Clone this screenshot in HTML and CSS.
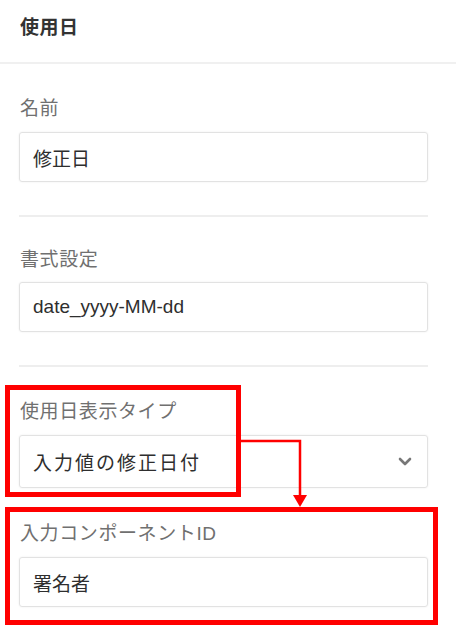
FILE: index.html
```html
<!DOCTYPE html>
<html lang="ja">
<head>
<meta charset="utf-8">
<link rel="stylesheet" href="styles.css">
</head>
<body>
<div class="panel">
  <div class="header">使用日</div>
  <div class="field sep">
    <div class="label">名前</div>
    <div class="input">修正日</div>
  </div>
  <div class="field sep tight">
    <div class="label">書式設定</div>
    <div class="input">date_yyyy-MM-dd</div>
  </div>
  <div class="field open">
    <div class="label">使用日表示タイプ</div>
    <div class="input select">
      <span class="select-text">入力値の修正日付</span>
      <svg class="chevron" width="14" height="9" viewBox="0 0 14 9"><path d="M2 2 L7 7 L12 2" fill="none" stroke="#777" stroke-width="2.6" stroke-linecap="round" stroke-linejoin="round"/></svg>
    </div>
  </div>
  <div class="field last">
    <div class="label">入力コンポーネントID</div>
    <div class="input">署名者</div>
  </div>

  <div class="callout callout-1"></div>
  <div class="callout callout-2"></div>
  <svg class="arrow" width="456" height="636" viewBox="0 0 456 636">
    <path d="M240 441 H300 V496" fill="none" stroke="#ff0000" stroke-width="2.5"/>
    <polygon points="293,495 307,495 300,507" fill="#ff0000"/>
  </svg>
</div>
</body>
</html>
```

FILE: styles.css
```css
html, body {
  margin: 0;
  padding: 0;
  background: #ffffff;
}

body {
  font-family: "Liberation Sans", "Noto Sans CJK JP", sans-serif;
  color: #333333;
}

.panel {
  position: relative;
  width: 456px;
  height: 636px;
  overflow: hidden;
}

.header {
  box-sizing: border-box;
  height: 64px;
  padding: 17px 20px 0;
  font-size: 19px;
  line-height: 22px;
  font-weight: bold;
  letter-spacing: 0.5px;
  color: #333333;
  border-bottom: 2px solid #f0f0f0;
}

.field {
  margin: 0 28px 0 19px;
  padding: 33px 0 33px;
}

.field.sep {
  border-bottom: 2px solid #eeeeee;
}

.field.tight {
  padding-top: 31px;
  padding-bottom: 33px;
}

.field.tight .label {
  margin-bottom: 10px;
}

.field.open {
  padding-bottom: 0;
}

.field.last {
  padding-top: 34px;
  padding-bottom: 0;
}

.label {
  font-size: 19px;
  line-height: 24px;
  letter-spacing: 0.6px;
  color: #707070;
  margin-bottom: 11px;
  padding-left: 1px;
}

.input {
  box-sizing: border-box;
  height: 50px;
  border: 1.5px solid #e2e2e2;
  border-radius: 3px;
  box-shadow: 0 0 2px rgba(0, 0, 0, 0.08);
  padding: 0 14px 0 13px;
  display: flex;
  align-items: center;
  font-size: 19px;
  color: #2e2e2e;
}

.select {
  height: 53px;
  justify-content: space-between;
}

.select-text {
  letter-spacing: 2px;
}

.chevron {
  margin-right: 1px;
}

.callout {
  position: absolute;
  box-sizing: border-box;
  border: 5px solid #ff0000;
}

.callout-1 {
  left: 5px;
  top: 385px;
  width: 236px;
  height: 112px;
}

.callout-2 {
  left: 5px;
  top: 507px;
  width: 433px;
  height: 118px;
}

.arrow {
  position: absolute;
  left: 0;
  top: 0;
  pointer-events: none;
}
```
